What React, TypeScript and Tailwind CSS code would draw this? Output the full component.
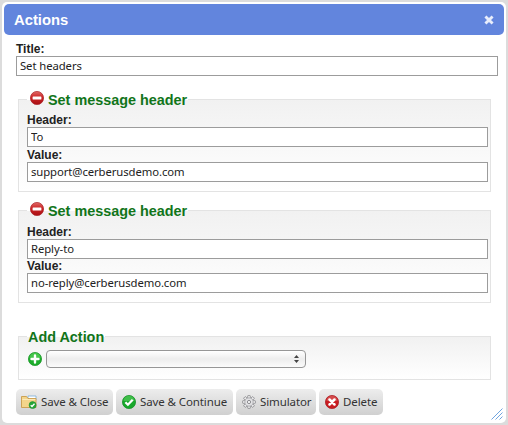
import React from "react";

const INPUT =
  "block h-[20px] w-full border border-[#9c9c9c] bg-white px-[3px] pt-0 pb-[2px] font-['Noto_Sans','Open_Sans',sans-serif] text-[11.3px] leading-[16px] tracking-[-0.08px] text-[#222] outline-none";
const LABEL = "block h-[14px] text-[12px] font-bold leading-[14px] text-[#222]";
const FIELDSET =
  "ml-[14px] w-[473px] min-w-0 border border-[#e3e3e3] bg-linear-to-b from-[#f1f1f1] to-white pr-[2px] pl-[8px]";
const LEGEND =
  "flex h-[19px] items-center px-px pt-px text-[14.4px] font-bold leading-[18px] text-[#11751a]";

function MinusIcon() {
  return (
    <svg width="14" height="14" viewBox="0 0 14 14" className="mr-[4px] mb-[4px] ml-[2px] shrink-0">
      <defs>
        <linearGradient id="red" x1="0" y1="0" x2="0" y2="1">
          <stop offset="0" stopColor="#e06b68" />
          <stop offset=".45" stopColor="#cb2425" />
          <stop offset="1" stopColor="#a90f14" />
        </linearGradient>
      </defs>
      <circle cx="7" cy="7" r="6.6" fill="url(#red)" stroke="#a92125" strokeWidth=".7" />
      <rect x="2.6" y="5.4" width="8.8" height="3.2" rx=".5" fill="#fff" />
    </svg>
  );
}

function PlusIcon() {
  return (
    <svg width="14" height="14" viewBox="0 0 14 14" className="shrink-0">
      <circle cx="7" cy="7" r="6.6" fill="#1dae2c" stroke="#159124" strokeWidth=".7" />
      <path d="M1.5 6a5.5 5.2 0 0 1 11 0Z" fill="#45c64b" />
      <path d="M7 3.5v7M3.5 7h7" stroke="#fff" strokeWidth="2.4" strokeLinecap="round" />
    </svg>
  );
}

function CheckIcon() {
  return (
    <svg width="14" height="14" viewBox="0 0 14 14" className="shrink-0">
      <circle cx="7" cy="7" r="6.6" fill="#18a82c" stroke="#128c22" strokeWidth=".7" />
      <path d="M1.5 6a5.5 5.2 0 0 1 11 0Z" fill="#3fbe49" />
      <path d="m3.4 7.2 2.5 2.5 4.8-5" fill="none" stroke="#fff" strokeWidth="2.3" />
    </svg>
  );
}

function FolderIcon() {
  return (
    <svg width="16" height="14" viewBox="0 0 16 14" className="-ml-px shrink-0">
      <path d="M7 1h8v4H7Z" fill="#fff" stroke="#78acd5" strokeWidth=".8" />
      <path d="M.5 12.5v-11h5l1.5 2h8v9Z" fill="#f3d58b" stroke="#c99c4b" strokeWidth=".9" />
      <path d="M1.3 4.5h13" stroke="#fbe9b9" />
      <circle cx="11.6" cy="10.1" r="3.5" fill="#25a638" stroke="#198d2b" strokeWidth=".6" />
      <path d="m9.7 10.2 1.3 1.3 2.5-2.8" fill="none" stroke="#fff" strokeWidth="1.3" />
    </svg>
  );
}

const TEETH = [0, 45, 90, 135, 180, 225, 270, 315];

function GearIcon() {
  return (
    <svg width="14" height="14" viewBox="0 0 14 14" className="shrink-0">
      <g fill="#ececec" stroke="#88888c" strokeWidth=".8">
        {TEETH.map((angle) => (
          <rect key={angle} x="5.7" y=".5" width="2.6" height="3" rx=".6" transform={`rotate(${angle} 7 7)`} />
        ))}
      </g>
      <circle cx="7" cy="7" r="4.1" fill="#e2e2e4" stroke="#a2a2a6" strokeWidth=".7" />
      <circle cx="7" cy="7" r="1.6" fill="#fafafa" stroke="#808085" strokeWidth=".9" />
    </svg>
  );
}

function DeleteIcon() {
  return (
    <svg width="14" height="14" viewBox="0 0 14 14" className="shrink-0">
      <circle cx="7" cy="7" r="6.6" fill="#c91d22" stroke="#a51a20" strokeWidth=".7" />
      <path d="M1.5 6a5.5 5.2 0 0 1 11 0Z" fill="#d44a4b" />
      <path d="m4.5 4.5 5 5m0-5-5 5" stroke="#fff" strokeWidth="2.5" strokeLinecap="round" />
    </svg>
  );
}

function HeaderAction({ header, value, offset, gap }: { header: string; value: string; offset: string; gap: string }) {
  return (
    <fieldset className={`${FIELDSET} h-[102px]`}>
      <legend className={LEGEND}>
        <MinusIcon />
        <span>Set message header</span>
      </legend>
      <div className={`${offset} w-[461px]`}>
        <label className={LABEL}>Header:</label>
        <input className={INPUT} defaultValue={header} />
        <label className={`${LABEL} ${gap}`}>Value:</label>
        <input className={INPUT} defaultValue={value} />
      </div>
    </fieldset>
  );
}

function ActionButton({ icon, label, width }: { icon: React.ReactNode; label: string; width: string }) {
  return (
    <button
      className={`${width} flex h-[26px] items-center gap-[4px] rounded-[5px] bg-linear-to-b from-[#ededed] to-[#d0d0d0] pl-[6px] font-['Noto_Sans','Open_Sans',sans-serif] text-[11.5px] tracking-[-0.1px] whitespace-nowrap text-[#333]`}
    >
      {icon}
      <span className="pb-px leading-[16px]">{label}</span>
    </button>
  );
}

export default function App() {
  return (
    <div className="h-[425px] w-[508px] bg-[#dcdcdc] p-[2px] font-['Liberation_Sans',Arial,sans-serif]">
      <div className="relative h-[421px] w-[504px] rounded-[5px] bg-white p-[2px]">
        <header className="flex h-[31px] items-center justify-between rounded-[5px] bg-[#6285dd] pr-[10px] pl-[10px] text-white">
          <h1 className="pt-px text-[14.8px] font-bold">Actions</h1>
          <svg width="10" height="10" viewBox="0 0 9 9">
            <path d="m1.300 1.300 6.400 6.400m0-6.400-6.400 6.400" stroke="#e8edfb" strokeWidth="2.600" />
          </svg>
        </header>

        <div className="ml-[12px] w-[482px] pt-[7px]">
          <label className={LABEL}>Title:</label>
          <input className={INPUT} defaultValue="Set headers" />
        </div>

        <div className="mt-[14px]">
          <HeaderAction header="To" value="support@cerberusdemo.com" offset="pt-[4px]" gap="mt-[1px]" />
          <div className="h-[9px]" />
          <HeaderAction header="Reply-to" value="no-reply@cerberusdemo.com" offset="pt-[5px]" gap="" />
        </div>

        <fieldset className={`${FIELDSET} mt-[24px] h-[53px]`}>
          <legend className={LEGEND}>Add Action</legend>
          <div className="flex items-center gap-[4px] pt-[4px] pl-px">
            <PlusIcon />
            <button aria-label="Action" className="flex h-[18px] w-[260px] items-center justify-end rounded-[4px] border border-[#969696] bg-linear-to-b from-white via-[#ededed] to-[#fbfbfb] pr-[6px]">
              <svg width="5" height="8" viewBox="0 0 5 8">
                <path d="M0 3 2.500 0 5 3ZM0 5h5L2.500 8Z" fill="#444" />
              </svg>
            </button>
          </div>
        </fieldset>

        <div className="mt-[9px] ml-[12px] flex gap-[3px]">
          <ActionButton icon={<FolderIcon />} label="Save & Close" width="w-[97px]" />
          <ActionButton icon={<CheckIcon />} label="Save & Continue" width="w-[117px]" />
          <ActionButton icon={<GearIcon />} label="Simulator" width="w-[80px]" />
          <ActionButton icon={<DeleteIcon />} label="Delete" width="w-[64px]" />
        </div>

        <svg width="12" height="12" viewBox="0 0 12 12" className="absolute right-[3px] bottom-[3px]">
          <path d="M.5 11.500l11-11M4.500 11.500l7-7M8.500 11.500l3-3" stroke="#71a5df" />
        </svg>
      </div>
    </div>
  );
}
